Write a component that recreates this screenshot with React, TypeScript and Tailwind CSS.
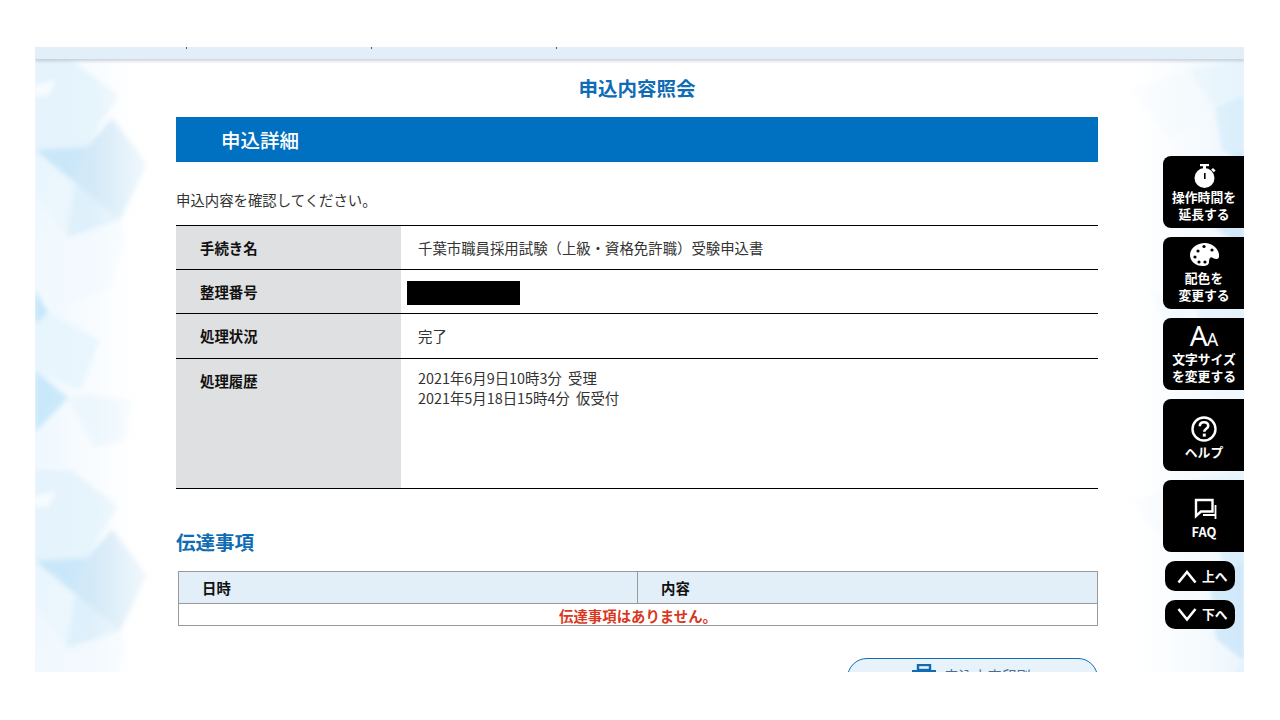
import type { ReactNode } from 'react';

const font = "font-['Noto_Sans_CJK_JP','Noto_Sans',sans-serif]";

function LeftTile() {
  return (
    <>
      <polygon points="35,59 70,59 118,95 87,147 35,150" fill="#e4f3fc" />
      <polygon points="35,85 56,80 48,96 35,96" fill="#f7fcff" />
      <polygon points="35,150 87,147 75,183" fill="#c8e6f9" />
      <polygon points="87,147 112,118 147,164 120,220 75,183" fill="#cfe7f7" />
      <polygon points="75,183 120,220 67,238" fill="#dcEffb" />
      <polygon points="35,150 75,183 67,238 35,195" fill="#eaf6fd" />
      <polygon points="67,238 120,220 125,240 108,290 48,312 35,290 35,240" fill="#f2f9fe" />
      <polygon points="35,290 48,312 35,325" fill="#c6e6fa" />
      <polygon points="35,325 48,312 100,340 80,390 35,370" fill="#e7f5fd" />
      <polygon points="35,370 68,398 35,432" fill="#c9e8fb" />
      <polygon points="68,398 90,395 130,400 125,440 95,448" fill="#ebf6fd" />
    </>
  );
}

function RightTile() {
  return (
    <>
      <polygon points="1130,90 1190,70 1215,108 1172,140" fill="#f1f8fd" />
      <polygon points="1215,108 1244,95 1244,165 1222,150" fill="#d9eefb" />
      <polygon points="1190,70 1244,60 1244,95 1215,108" fill="#e6f4fc" />
      <polygon points="1210,172 1244,150 1244,250 1216,228" fill="#cfe8fa" />
      <polygon points="1150,290 1195,305 1170,335" fill="#eef7fd" />
      <polygon points="1195,305 1244,250 1244,345 1205,340" fill="#e3f2fc" />
      <polygon points="1205,340 1244,345 1244,420 1218,400" fill="#eff8fe" />
    </>
  );
}

function Backdrop() {
  return (
    <>
      <svg className="absolute left-0 top-0" width="141" height="625" viewBox="35 47 141 625">
        <defs>
          <linearGradient id="baseL" x1="0" x2="1" y1="0" y2="0">
            <stop offset="0" stopColor="#eff8fe" />
            <stop offset="0.8" stopColor="#ffffff" />
          </linearGradient>
          <linearGradient id="fadeL" x1="0" x2="1" y1="0" y2="0">
            <stop offset="0" stopColor="#fff" stopOpacity="0" />
            <stop offset="0.4" stopColor="#fff" stopOpacity="0.08" />
            <stop offset="0.72" stopColor="#fff" stopOpacity="0.6" />
            <stop offset="0.95" stopColor="#fff" stopOpacity="1" />
          </linearGradient>
          <filter id="softL">
            <feGaussianBlur stdDeviation="2.5" />
          </filter>
        </defs>
        <rect x="35" y="47" width="141" height="625" fill="url(#baseL)" />
        <g filter="url(#softL)">
          <LeftTile />
          <g transform="translate(0 411)">
            <LeftTile />
          </g>
        </g>
        <rect x="35" y="47" width="141" height="625" fill="url(#fadeL)" />
      </svg>
      <svg className="absolute right-0 top-0" width="146" height="625" viewBox="1098 47 146 625">
        <defs>
          <linearGradient id="baseR" x1="1" x2="0" y1="0" y2="0">
            <stop offset="0" stopColor="#ecf6fd" />
            <stop offset="0.85" stopColor="#ffffff" />
          </linearGradient>
          <linearGradient id="fadeR" x1="1" x2="0" y1="0" y2="0">
            <stop offset="0" stopColor="#fff" stopOpacity="0" />
            <stop offset="0.45" stopColor="#fff" stopOpacity="0.3" />
            <stop offset="0.9" stopColor="#fff" stopOpacity="1" />
          </linearGradient>
          <filter id="softR">
            <feGaussianBlur stdDeviation="2" />
          </filter>
        </defs>
        <rect x="1098" y="47" width="146" height="625" fill="url(#baseR)" />
        <g filter="url(#softR)">
          <RightTile />
          <g transform="translate(0 411)">
            <RightTile />
          </g>
        </g>
        <rect x="1098" y="47" width="146" height="625" fill="url(#fadeR)" />
      </svg>
    </>
  );
}

function Row({ label, className, children }: { label: string; className: string; children: ReactNode }) {
  return (
    <div className={`flex border-b border-black ${className}`}>
      <div className="flex w-[225px] shrink-0 bg-[#dfe0e2] pl-6 pt-3 text-[14.4px] font-bold leading-5 text-[#111]">{label}</div>
      <div className="flex-1 bg-white text-[14.4px] leading-5 text-[#333]">{children}</div>
    </div>
  );
}

function SideButton({ pad, icon, lines }: { pad: string; icon: ReactNode; lines: string[] }) {
  return (
    <div className={`flex h-[72px] w-[81px] flex-col items-center rounded-l-lg bg-black pl-px text-white ${pad}`}>
      {icon}
      {lines.map(l => (
        <span key={l} className="text-[12.8px] font-bold leading-[17px] whitespace-nowrap">{l}</span>
      ))}
    </div>
  );
}

function Stopwatch() {
  return (
    <svg width="30" height="27" viewBox="0 0 30 27" className="shrink-0">
      <rect x="11" y="3" width="9" height="2.2" fill="#fff" />
      <rect x="14" y="5" width="3" height="4" fill="#fff" />
      <rect x="22.5" y="7.5" width="3.6" height="2.6" transform="rotate(42 24 9)" fill="#fff" />
      <circle cx="15.5" cy="17" r="10" fill="#fff" />
      <rect x="15" y="12" width="1.6" height="6" fill="#000" />
    </svg>
  );
}

function Palette() {
  return (
    <svg width="30" height="27" viewBox="0 0 30 27" className="shrink-0">
      <path d="M16 1 C24 1 31 8 30 15 C29 18 26 17 24 16 C21 14 20 17 20 20 C20 23 17 24 14 24 C6 24 1 19 1 13 C1 6 8 1 16 1 Z" fill="#fff" />
      <circle cx="9" cy="9" r="1.6" fill="#000" />
      <circle cx="15" cy="4.5" r="1.6" fill="#000" />
      <circle cx="23" cy="8" r="1.6" fill="#000" />
      <circle cx="6" cy="15" r="1.6" fill="#000" />
      <circle cx="10" cy="20" r="1.6" fill="#000" />
      <circle cx="16" cy="20" r="1.6" fill="#000" />
    </svg>
  );
}

function HelpIcon() {
  return (
    <svg width="28" height="28" viewBox="0 0 28 28" className="shrink-0">
      <circle cx="14" cy="14" r="11.5" fill="none" stroke="#fff" strokeWidth="2.4" />
      <path d="M9.8 11.2 C9.8 8.6 11.6 7.3 14 7.3 C16.4 7.3 18.2 8.7 18.2 10.9 C18.2 13.6 14.3 13.9 14.3 16.8" fill="none" stroke="#fff" strokeWidth="2.6" />
      <rect x="12.8" y="18.6" width="3" height="3" fill="#fff" />
    </svg>
  );
}

function FaqIcon() {
  return (
    <svg width="28" height="28" viewBox="0 0 28 28" className="shrink-0">
      <path d="M6 5 H22.5 V16.5 H11 L6 21 Z" fill="none" stroke="#fff" strokeWidth="2.4" />
      <path d="M25.5 10 V24 M13 20 H25.5" fill="none" stroke="#fff" strokeWidth="1.8" />
    </svg>
  );
}

function ScrollButton({ up, label, height }: { up: boolean; label: string; height: string }) {
  return (
    <div className={`mr-[9px] flex w-[70px] items-center gap-[5px] rounded-[10px] bg-black pl-[12px] text-white ${height}`}>
      <svg width="20" height="16" viewBox="0 0 20 16">
        <polyline points={up ? '1.5,14.5 10,4 18.5,14.5' : '1.5,2 10,12.5 18.5,2'} fill="none" stroke="#fff" strokeWidth="2.6" />
      </svg>
      <span className="text-[12.8px] font-bold leading-none">{label}</span>
    </div>
  );
}

export default function App() {
  return (
    <div className={`h-screen w-full overflow-hidden bg-white pl-[35px] pt-[47px] ${font}`}>
      <div className="relative h-[625px] w-[1209px] overflow-hidden bg-white">
        <Backdrop />

        <div className="relative flex h-3 bg-[#e2eff9] pl-[151px] shadow-[0_2px_3px_rgba(90,110,140,0.3)]">
          {[0, 1, 2].map(i => (
            <div key={i} className="w-[185px]">
              <div className="h-0.5 w-px bg-[#555]" />
            </div>
          ))}
        </div>

        <main className="relative ml-[141px] w-[922px]">
          <h1 className="mt-3.5 text-center text-[19.5px] font-bold leading-[30px] text-[#0f6cb4]">申込内容照会</h1>

          <h2 className="mt-3.5 flex h-[45px] items-center bg-[#0070c0] pl-[45px] text-[19.5px] font-medium text-white">申込詳細</h2>

          <p className="mt-7 text-[14.4px] leading-5 text-[#333]">申込内容を確認してください。</p>

          <div className="mt-[15px] border-t border-black">
            <Row label="手続き名" className="h-[44px]">
              <div className="pl-[17px] pt-3">千葉市職員採用試験（上級・資格免許職）受験申込書</div>
            </Row>
            <Row label="整理番号" className="h-[44px]">
              <div className="ml-1.5 mt-[11px] h-6 w-[113px] bg-black" />
            </Row>
            <Row label="処理状況" className="h-[45px]">
              <div className="pl-[17px] pt-3">完了</div>
            </Row>
            <Row label="処理履歴" className="h-[130px]">
              <div className="pl-[17px] pt-[9px]">
                <div className="[word-spacing:3px]">2021年6月9日10時3分 受理</div>
                <div className="[word-spacing:3px]">2021年5月18日15時4分 仮受付</div>
              </div>
            </Row>
          </div>

          <h2 className="mt-[38px] text-[19.5px] font-bold leading-[30px] text-[#0f6cb4]">伝達事項</h2>

          <div className="ml-0.5 mt-3.5 border border-[#999] text-[14.4px]">
            <div className="flex h-[32px] border-b border-[#999] bg-[#e2eff9] font-bold leading-[32px] text-[#111]">
              <div className="w-[459px] border-r border-[#999] pl-[23px]">日時</div>
              <div className="pl-[23px]">内容</div>
            </div>
            <div className="h-[21px] bg-white text-center font-bold leading-[23px] text-[#d9381e]">伝達事項はありません。</div>
          </div>

          <div className="ml-[671px] mt-8 flex h-10 w-[251px] items-start justify-center gap-2 rounded-[20px] border border-[#0f6cb4] bg-[#e8f2fa] pr-[2px] pt-[5px]">
            <svg width="24" height="20" viewBox="0 0 24 20" className="shrink-0">
              <rect x="6" y="1" width="12" height="5" fill="none" stroke="#0f6cb4" strokeWidth="2.4" />
              <rect x="0" y="6" width="24" height="10" fill="#0f6cb4" />
            </svg>
            <span className="mt-0.5 text-[14.4px] leading-5 text-[#4a6f94]">申込内容印刷</span>
          </div>
        </main>

        <aside className="absolute right-0 top-[109px] flex flex-col items-end gap-[9px]">
          <SideButton pad="pt-[5px]" icon={<Stopwatch />} lines={['操作時間を', '延長する']} />
          <SideButton pad="pt-[5px]" icon={<Palette />} lines={['配色を', '変更する']} />
          <SideButton
            pad="pt-[5px]"
            icon={
              <div className="flex h-[27px] items-baseline font-['Noto_Sans',sans-serif] leading-[24px]">
                <span className="text-[28px] tracking-[-1px]">A</span>
                <span className="text-[18px]">A</span>
              </div>
            }
            lines={['文字サイズ', 'を変更する']}
          />
          <SideButton pad="pt-[16px]" icon={<HelpIcon />} lines={['ヘルプ']} />
          <SideButton pad="pt-[15px]" icon={<FaqIcon />} lines={['FAQ']} />
          <ScrollButton up label="上へ" height="h-[30px]" />
          <ScrollButton up={false} label="下へ" height="h-[29px]" />
        </aside>
      </div>
    </div>
  );
}
